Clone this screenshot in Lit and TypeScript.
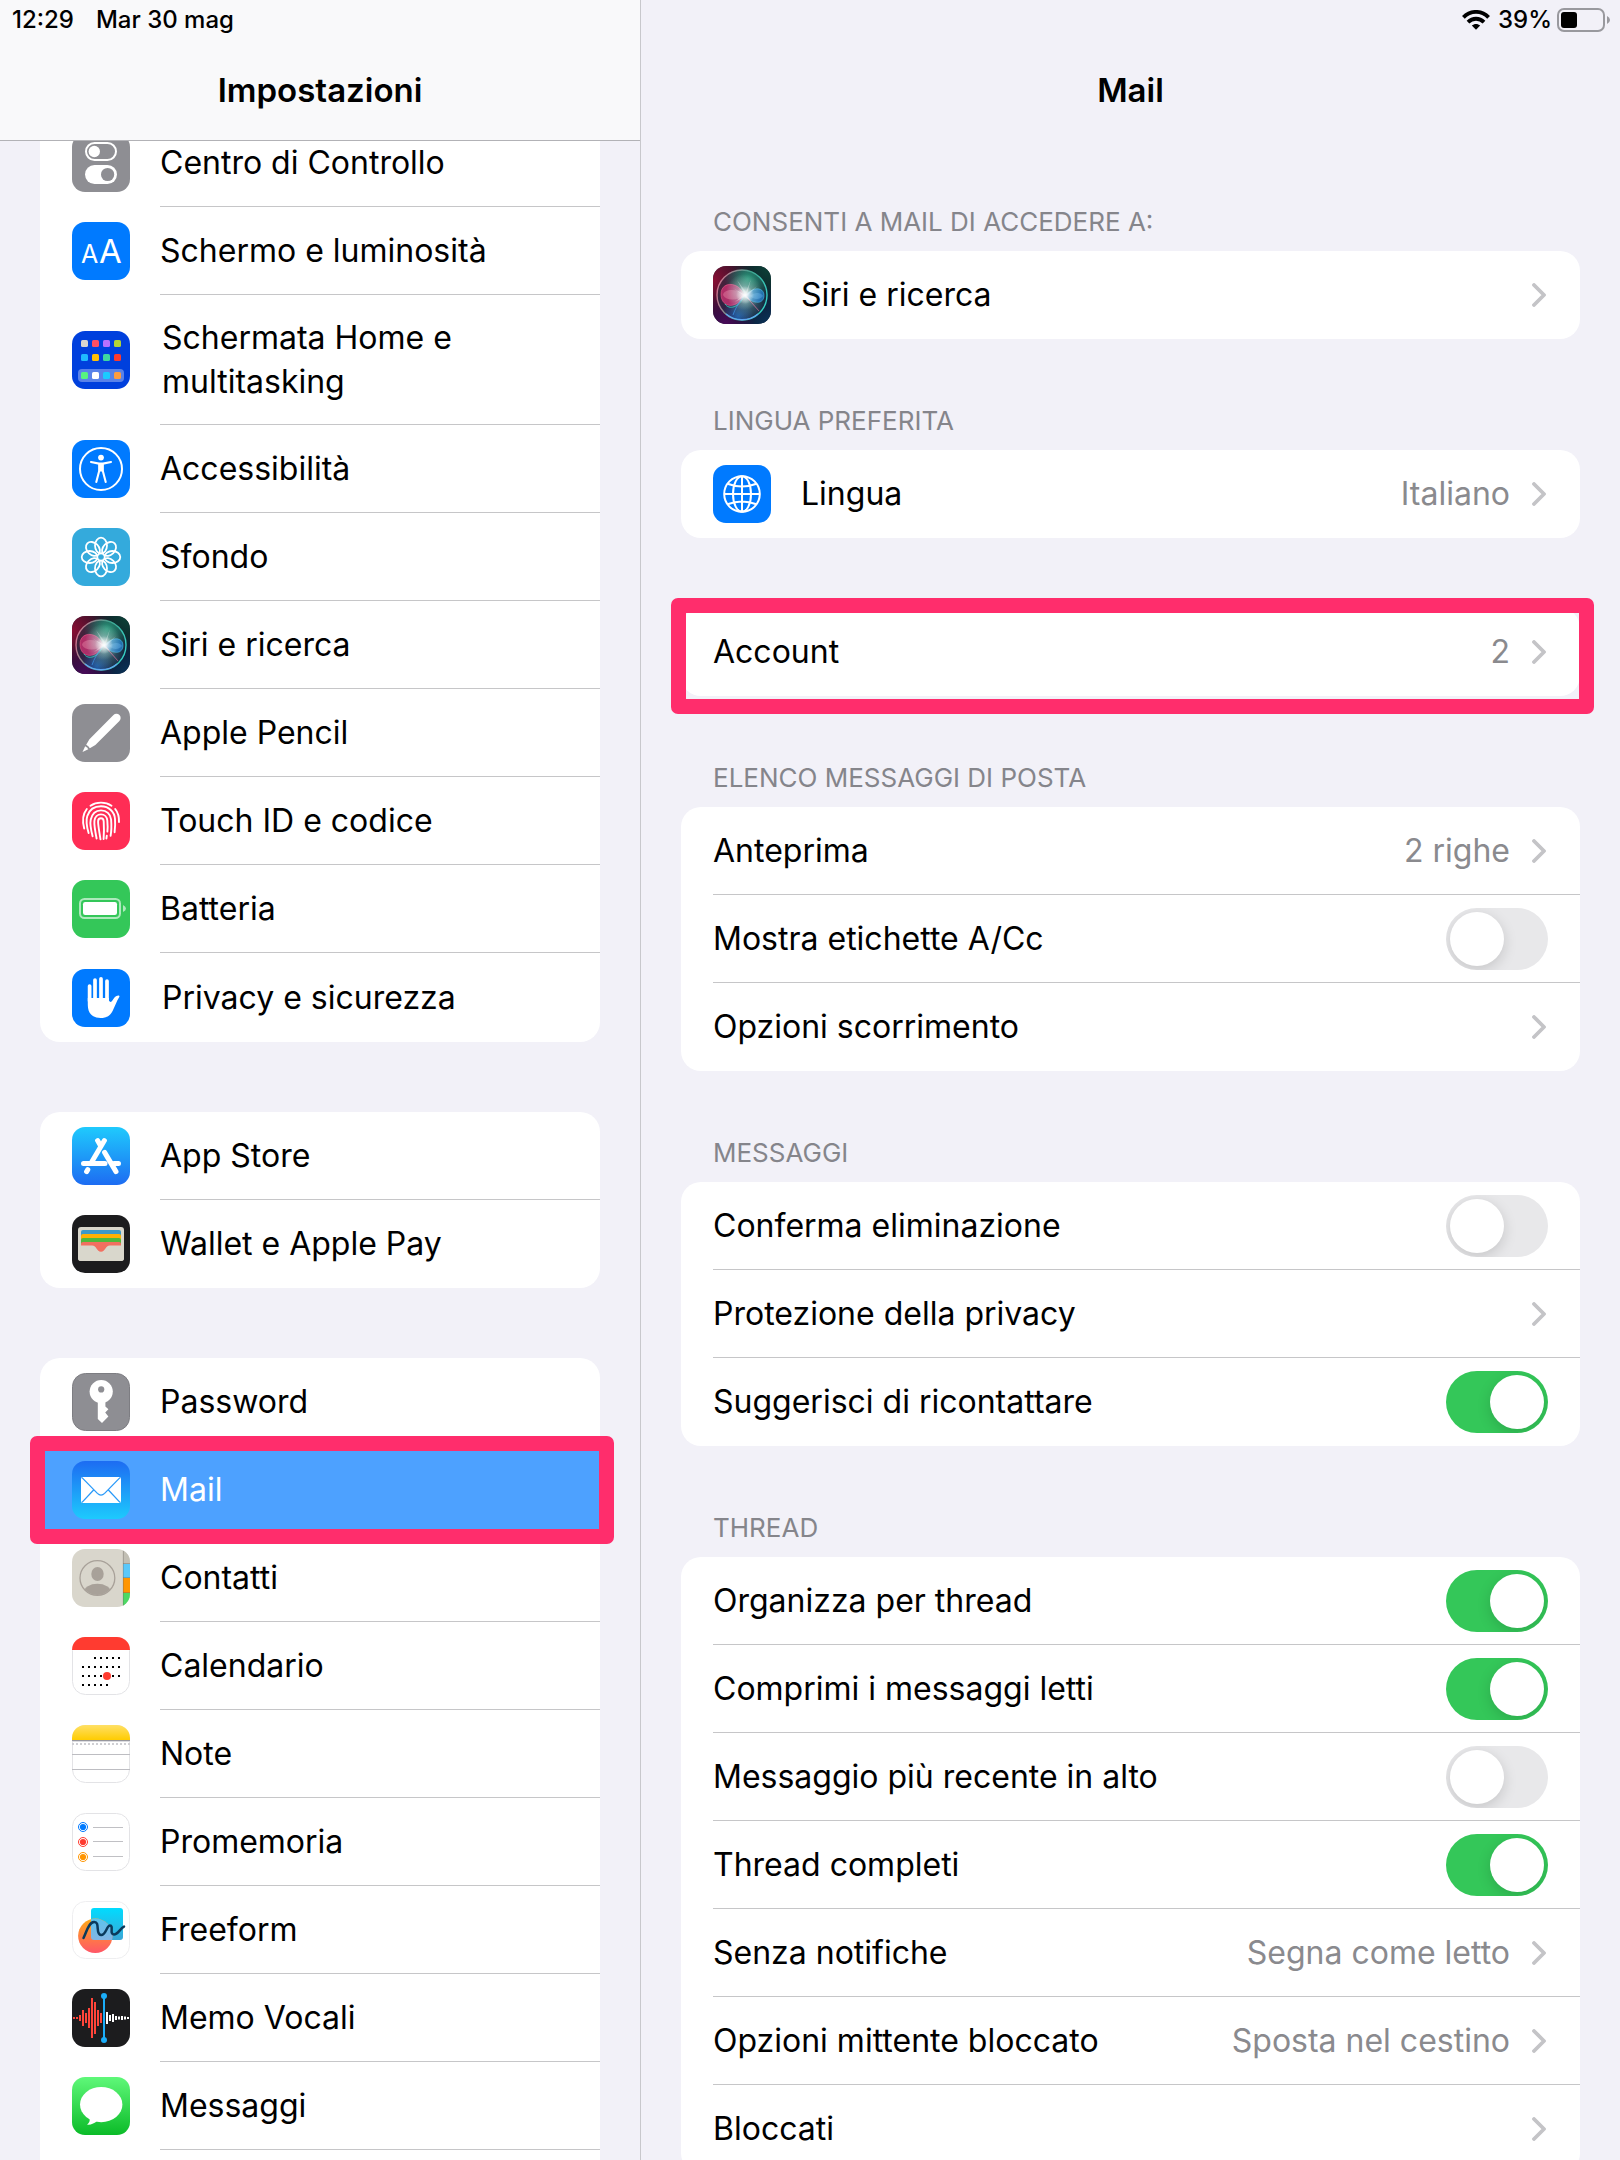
import { LitElement, html, svg, css, nothing, TemplateResult } from "lit";
import { customElement, property, state } from "lit/decorators.js";
import { classMap } from "lit/directives/class-map.js";

type Art = TemplateResult | TemplateResult[];

const plate = (fill: string): Art => svg`<rect width="58" height="58" rx="13" fill=${fill} />`;
const outlined = svg`<rect x="0.5" y="0.5" width="57" height="57" rx="13" fill="#fff" stroke="#e3e3e6" />`;
const vertical = (id: string, from: string, to: string) => svg`
  <linearGradient id=${id} x1="0" y1="0" x2="0" y2="1">
    <stop offset="0" stop-color=${from} /><stop offset="1" stop-color=${to} />
  </linearGradient>`;
const glow = (id: string, cx: number, cy: number, r: number, color: string, alpha = 1) => svg`
  <radialGradient id=${id} gradientUnits="userSpaceOnUse" cx=${cx} cy=${cy} r=${r}>
    <stop offset="0" stop-color=${color} stop-opacity=${alpha} />
    <stop offset="1" stop-color=${color} stop-opacity="0" />
  </radialGradient>`;

const homeTiles = [
  [9, ["#d8d5d0", "#ff4f64", "#b871ff", "#b3d435"]],
  [23, ["#1fbaff", "#ffc107", "#3fd8a0", "#ff3a2d"]],
  [41, ["#57f57f", "#ffffff", "#1bcbff", "#ff9d40"]],
] as [number, string[]][];
const calendarDots: [number, number[]][] = [
  [20, [2, 3, 4, 5, 6]],
  [29, [0, 1, 2, 3, 4, 5, 6]],
  [38, [0, 1, 2, 3, 4, 5, 6]],
  [47, [0, 1, 2, 3, 4]],
];
const redBars = [2, 2, 6, 16, 10, 20, 40, 32, 16, 10];
const whiteBars = [12, 6, 8, 4, 3, 4, 3, 2];

const art: Record<string, () => Art> = {
  control: () => svg`${plate("#8e8e93")}
    <rect x="14" y="9" width="30" height="17" rx="8.5" fill="none" stroke="#fff" stroke-width="2" />
    <circle cx="22.3" cy="17.5" r="5.7" fill="#fff" />
    <rect x="13" y="31" width="32" height="19" rx="9.5" fill="#fff" />
    <circle cx="35.6" cy="40.5" r="6.6" fill="#8e8e93" />`,
  display: () => svg`${plate("#007aff")}
    <text class="glyph" x="9" y="41" font-size="25" fill="#fff">A</text>
    <text class="glyph" x="27" y="41" font-size="33" fill="#fff">A</text>`,
  home: () => svg`${plate("#0040dd")}
    <rect x="6" y="38" width="46" height="13" rx="4" fill="#fff" fill-opacity="0.35" />
    ${homeTiles.map(([y, row]) => row.map((c, i) => svg`<rect x=${9 + i * 11} y=${y} width="7" height="7" rx="1.6" fill=${c} />`))}`,
  access: () => svg`${plate("#007aff")}
    <circle cx="29" cy="29" r="21" fill="none" stroke="#fff" stroke-width="2" />
    <circle cx="29" cy="17.6" r="2.9" fill="#fff" />
    <path d="M19 22 L27 23.6 H31 L39 22 M27.3 24 V30.5 L24.3 42 M30.7 24 V30.5 L33.7 42" fill="none" stroke="#fff" stroke-width="2.1" stroke-linecap="round" stroke-linejoin="round" />
    <path d="M26.5 23 H31.5 V31.5 H26.5Z" fill="#fff" />`,
  wallpaper: () => svg`${plate("#34aadc")}
    <g fill="none" stroke="#fff" stroke-width="1.8">
      ${[0, 45, 90, 135, 180, 225, 270, 315].map((a) => svg`<ellipse cx="29" cy="17.6" rx="6" ry="7.9" transform=${`rotate(${a} 29 29)`} />`)}
    </g>`,
  siri: () => svg`
    <defs>
      <clipPath id="siri-clip"><rect width="58" height="58" rx="13" /></clipPath>
      ${glow("s-tl", 0, 14, 42, "#8a0f34")}${glow("s-tr", 58, 0, 42, "#0b4538")}
      ${glow("s-br", 58, 58, 40, "#08345a")}${glow("s-bl", 12, 58, 30, "#4a0a5a")}
      ${glow("s-top", 35, 13, 23, "#2ba884", 0.85)}${glow("s-low", 25, 50, 16, "#1f6dc0", 0.8)}
      ${glow("s-haze", 33, 36, 18, "#5f9aa2", 0.7)}
      ${glow("s-core", 32, 29, 9, "#ffffff")}${glow("s-halo", 31, 26, 18, "#d0f2ec", 0.65)}
      <linearGradient id="s-ring" x1="0" y1="0.3" x2="1" y2="0.6">
        <stop offset="0" stop-color="#d0708c" /><stop offset="0.55" stop-color="#3fa58f" /><stop offset="1" stop-color="#36cfc4" />
      </linearGradient>
    </defs>
    <g clip-path="url(#siri-clip)">
      <rect width="58" height="58" fill="#111226" />
      <rect width="58" height="58" fill="url(#s-tl)" /><rect width="58" height="58" fill="url(#s-tr)" />
      <rect width="58" height="58" fill="url(#s-br)" /><rect width="58" height="58" fill="url(#s-bl)" />
      <circle cx="29" cy="29" r="25" fill="#1f3448" fill-opacity="0.5" />
      <circle cx="29" cy="29" r="25" fill="url(#s-top)" /><circle cx="29" cy="29" r="25" fill="url(#s-low)" />
      <circle cx="29" cy="29" r="25" fill="url(#s-haze)" />
      <path d="M31 29 C26 15 8 15 8 28 C8 43 25 43 31 29Z" fill="#e0357a" fill-opacity="0.7" stroke="#f05a8c" stroke-opacity="0.7" stroke-width="0.8" />
      <path d="M31 29 C24 22 11 23 10 29 C13 35 25 35 31 29Z" fill="#f4a0b8" fill-opacity="0.35" />
      <path d="M12 38 C16 44 26 42 31 30" fill="none" stroke="#35b8b0" stroke-width="1" />
      <path d="M32 30 C40 20 51 21 51 29.5 C51 38 41 39 32 30Z" fill="#2a8fe6" fill-opacity="0.65" stroke="#4cc4f0" stroke-opacity="0.7" stroke-width="0.8" />
      <path d="M37 30 C41 26 48 26 50 30 C47 34 41 34 37 30Z" fill="#7cc8ff" fill-opacity="0.3" />
      <path d="M33 30 L46 45 L37 35Z" fill="#e08aac" fill-opacity="0.7" stroke="#d9709a" stroke-opacity="0.5" stroke-width="0.8" />
      <path d="M30 31 C25 38 22 43 20 49" fill="none" stroke="#3a8de0" stroke-opacity="0.8" stroke-width="1" />
      <rect width="58" height="58" fill="url(#s-halo)" /><rect width="58" height="58" fill="url(#s-core)" />
      <path d="M32 29 L24 14 L33 26 L38 13 L34 28 L44 20 L34 30 L38 35 L31 31 L22 36 L30 29 L20 22Z" fill="#fff" fill-opacity="0.35" />
      <circle cx="29" cy="29" r="25" fill="none" stroke="url(#s-ring)" stroke-width="1.4" />
      <path d="M13 48 A25 25 0 0 0 45 48" fill="none" stroke="#5fa6f0" stroke-width="1.4" />
    </g>`,
  pencil: () => svg`${plate("#8e8e93")}
    <g transform="translate(10.5 48) rotate(-45)" fill="#fff">
      <path d="M0 0 L6 -2.2 Q6.8 0 6 2.2Z" /><path d="M7.8 -2.6 L14 -4.2 H48 a4.2 4.2 0 0 1 0 8.4 H14 L7.8 2.6 Q8.6 0 7.8 -2.6Z" />
    </g>`,
  touch: () => svg`${plate("#ff2d55")}
    <g fill="none" stroke="#fff" stroke-width="1.9" stroke-linecap="round">
      <path d="M18.5 13.8 C24.5 9.6 33.5 9.6 39.5 13.8" />
      <path d="M14.8 17 C10.4 22.5 10.2 29 12.2 36.5" /><path d="M43.2 17 C46.4 21 47.2 25 47 30" />
      <path d="M16.6 41 C14.2 33 14 28 15.3 24 C17.5 17.5 23 14.3 29 14.3 C37 14.3 42.5 20 43 27 C43.5 33 43 37 42.6 40.2" />
      <path d="M20.6 44.3 C18.4 36 17.8 32 18.7 27.8 C20 22 24 18.4 29 18.4 C34.5 18.4 38.6 22 39.1 27.5 C39.6 34 39.3 40 38.6 43.8" />
      <path d="M24.6 46.5 C22.9 38 22 33 22.4 29 C22.8 25 25.5 22.4 29 22.4 C32.5 22.4 35 25 35.3 28.5 C35.8 34 35.7 37 35.4 39.6" />
      <path d="M34.8 43.6 L34.4 46.5" />
      <path d="M28.5 47.4 C27.4 40 26.1 34 26.1 29.5 C26.1 27.5 27.3 26.3 29 26.3 C30.8 26.3 31.6 27.5 31.7 29.5 C32.1 36 32 42 31.6 47" />
    </g>`,
  battery: () => svg`${plate("#34c759")}
    <rect x="8" y="19" width="40" height="19" rx="4.5" fill="none" stroke="#fff" stroke-opacity="0.6" stroke-width="2" />
    <rect x="11" y="22" width="34" height="13" rx="2.2" fill="#fff" />
    <path d="M51 25 Q54 26.5 54 28.5 Q54 30.5 51 32Z" fill="#fff" fill-opacity="0.6" />`,
  privacy: () => svg`${plate("#007aff")}
    <path d="M17.6 17 V32 M23 11 V30 M29 9.8 V30 M35 12 V32" stroke="#fff" stroke-width="3.7" stroke-linecap="round" />
    <path d="M15.8 29 H36.9 V31.6 C37.8 33.4 39.4 33.4 40.4 31.6 C42 28.6 43.8 26.2 46.6 26.4 C47.8 26.6 47.6 27.6 47 28.4 C44.8 31.6 43 37 40.6 42 C38 47 34 49 28.6 49 C20.4 49 15.8 44 15.8 36Z" fill="#fff" />`,
  store: () => svg`<defs>${vertical("g-store", "#1fcafd", "#1d6cf2")}</defs>${plate("url(#g-store)")}
    <path d="M32.4 13.6 L20 34.6 M25.6 13.6 L28.4 18.4 M32.6 25.4 L44 44.6 M11.5 36.5 H33 M42 36.5 H46.5 M15.8 42.6 L14.6 44.6" fill="none" stroke="#fff" stroke-width="5" stroke-linecap="round" />`,
  wallet: () => svg`${plate("#1c1c1e")}
    <rect x="6" y="12" width="46" height="34" rx="3" fill="#d9d7cc" />
    <path d="M9 31 V17 a2 2 0 0 1 2 -2 H47 a2 2 0 0 1 2 2 V31Z" fill="#3b99c9" />
    <path d="M9 31 V21 a2 2 0 0 1 2 -2 H47 a2 2 0 0 1 2 2 V31Z" fill="#ffb003" />
    <path d="M9 31 V25 a2 2 0 0 1 2 -2 H47 a2 2 0 0 1 2 2 V31Z" fill="#4fb83c" />
    <path d="M9 38 V29 a2 2 0 0 1 2 -2 H47 a2 2 0 0 1 2 2 V38Z" fill="#f26f60" />
    <path d="M6 30.5 H20 C25 30.5 24.5 36.8 29 36.8 C33.5 36.8 33 30.5 38 30.5 H52 V43 a3 3 0 0 1 -3 3 H9 a3 3 0 0 1 -3 -3Z" fill="#d9d7cc" />`,
  key: () => svg`<rect x="0.5" y="0.5" width="57" height="57" rx="13" fill="#8e8e93" stroke="#7d7d82" />
    <circle cx="29.2" cy="18.6" r="11.6" fill="#fff" />
    <path d="M25.8 27 H33.4 V33.4 L36.4 36.2 L33.2 39.6 L36.4 43.6 L30 50 L25.8 46Z" fill="#fff" />
    <circle cx="29.2" cy="16.4" r="3.1" fill="#8e8e93" />`,
  mail: () => svg`<defs>${vertical("g-mail", "#1d6cf2", "#1dcafd")}</defs>${plate("url(#g-mail)")}
    <rect x="9" y="16" width="40" height="26" rx="2" fill="#fff" />
    <path d="M10 16.6 L25.4 32.4 Q29 35.8 32.6 32.4 L48 16.6 M21.6 29 L10 41.4 M36.4 29 L48 41.4" fill="none" stroke="#2a9af9" stroke-width="1.3" />`,
  contacts: () => svg`
    <defs><clipPath id="c-clip"><rect width="58" height="58" rx="13" /></clipPath><clipPath id="c-face"><circle cx="25.4" cy="29" r="17" /></clipPath></defs>
    <g clip-path="url(#c-clip)">
      <rect width="58" height="58" fill="#d9d6cc" />
      <rect x="51" width="7" height="15" fill="#c2bfb4" /><rect x="51" y="15" width="7" height="14" fill="#5ac8fa" />
      <rect x="51" y="29" width="7" height="15" fill="#ff9500" /><rect x="51" y="44" width="7" height="14" fill="#4cd964" />
      <path d="M51 14.5 H58 M51 28.5 H58 M51 43.5 H58 M51.3 0 V58" stroke="#6b675e" stroke-opacity="0.5" stroke-width="0.8" />
    </g>
    <circle cx="25.4" cy="29" r="17.4" fill="none" stroke="#a8a199" stroke-width="1.3" />
    <ellipse cx="25.5" cy="25" rx="6.2" ry="7" fill="#a8a199" />
    <ellipse cx="25.4" cy="43" rx="13.5" ry="8.2" fill="#a8a199" clip-path="url(#c-face)" />`,
  calendar: () => svg`${outlined}
    <path d="M0 13 A13 13 0 0 1 13 0 H45 A13 13 0 0 1 58 13Z" fill="#ff3b30" />
    ${calendarDots.map(([y, cols]) => cols.map((c) => svg`<rect x=${10 + c * 6} y=${y} width="2" height="2" fill="#000" />`))}
    <circle cx="35" cy="39" r="4" fill="#ff3b30" />`,
  notes: () => svg`<defs>${vertical("g-note", "#ffe066", "#ffcc00")}</defs>${outlined}
    <path d="M0 15 V13 A13 13 0 0 1 13 0 H45 A13 13 0 0 1 58 13 V15Z" fill="url(#g-note)" />
    <rect y="15" width="58" height="1" fill="#98989e" /><rect y="16" width="58" height="1" fill="#dcdce0" />
    <path d="M0 19 H58" stroke="#cfcfd3" stroke-width="2" stroke-dasharray="2 2" />
    <rect y="29" width="58" height="1" fill="#bdbdc2" /><rect y="44" width="58" height="1" fill="#bdbdc2" />`,
  reminders: () => svg`${outlined}
    ${["#007aff", "#ff3b30", "#ff9500"].map((c, i) => svg`
      <circle cx="11" cy=${14 + i * 15} r="4.5" fill="none" stroke=${c} stroke-width="1" />
      <circle cx="11" cy=${14 + i * 15} r="3.1" fill=${c} />
      <rect x="21" y=${14 + i * 15 - (i ? 1 : 0)} width="30" height="1" fill="#c0c0c4" />`)}`,
  freeform: () => svg`
    <defs>${vertical("g-sq", "#00dcff", "#3ca6d6")}${vertical("g-ci", "#ffab17", "#ff5668")}${vertical("g-mix", "#5cc4ee", "#9aabdc")}
      <clipPath id="f-sq"><rect x="19" y="7" width="32" height="32" rx="3" /></clipPath></defs>
    <rect x="0.5" y="0.5" width="57" height="57" rx="13" fill="#fff" stroke="#eeeef0" />
    <rect x="19" y="7" width="32" height="32" rx="3" fill="url(#g-sq)" />
    <circle cx="23.3" cy="34.8" r="17.2" fill="url(#g-ci)" />
    <circle cx="23.3" cy="34.8" r="17.2" fill="url(#g-mix)" clip-path="url(#f-sq)" />
    <path d="M11.5 37 C15 30 16.5 21.5 22 21 C28.5 20.5 23 33.5 29 34 C34 34.4 34.5 24.5 38 24.5 C42 24.5 37 33.5 42 33.5 C46 33.5 48 27.5 52 25.6" fill="none" stroke="#0b3a5b" stroke-width="2.5" stroke-linecap="round" />`,
  voice: () => svg`${plate("#1c1c1e")}
    ${redBars.map((h, i) => svg`<rect x=${1 + i * 3} y=${29 - h / 2} width="2" height=${h} fill="#ff453a" />`)}
    ${whiteBars.map((h, i) => svg`<rect x=${34 + i * 3} y=${29 - h / 2} width="2" height=${h} fill="#fff" />`)}
    <rect x="31" y="7" width="2" height="44" fill="#1badf8" />
    <circle cx="32" cy="7" r="3" fill="#1badf8" /><circle cx="32" cy="51" r="3" fill="#1badf8" />`,
  messages: () => svg`<defs>${vertical("g-msg", "#5ff879", "#0bbb28")}</defs>${plate("url(#g-msg)")}
    <ellipse cx="29.2" cy="27.6" rx="21.2" ry="17.6" fill="#fff" />
    <path d="M17 40 C18.5 43.5 17.5 45.8 14.8 47.6 C18.8 48.2 22.5 46.2 25 44Z" fill="#fff" />`,
  globe: () => svg`${plate("#007aff")}
    <g fill="none" stroke="#fff" stroke-width="2">
      <circle cx="29" cy="29" r="17.8" /><ellipse cx="29" cy="29" rx="9" ry="17.8" />
      <path d="M29 11 V47 M11 29 H47 M14.5 18.8 Q29 24.4 43.5 18.8 M14.5 39.2 Q29 33.6 43.5 39.2" />
    </g>`,
};

@customElement("app-icon")
export class AppIcon extends LitElement {
  @property() name = "";
  static styles = css`
    :host { display: block; flex: none; width: 58px; height: 58px; }
    svg { display: block; width: 100%; height: 100%; }
    .glyph { font-family: Inter, sans-serif; font-weight: 400; }
  `;
  render() {
    return html`<svg viewBox="0 0 58 58" aria-hidden="true">${art[this.name]?.()}</svg>`;
  }
}

interface NavItem { icon: string; label: string; roomy?: boolean; }
interface Setting { id: string; label: string; icon?: string; value?: string; toggle?: boolean; marked?: boolean; }
interface Section { title?: string; rows: Setting[]; }

const navGroups: NavItem[][] = [
  [
    { icon: "control", label: "Centro di Controllo" },
    { icon: "display", label: "Schermo e luminosità" },
    { icon: "home", label: "Schermata Home e multitasking", roomy: true },
    { icon: "access", label: "Accessibilità" },
    { icon: "wallpaper", label: "Sfondo" },
    { icon: "siri", label: "Siri e ricerca" },
    { icon: "pencil", label: "Apple Pencil" },
    { icon: "touch", label: "Touch ID e codice" },
    { icon: "battery", label: "Batteria" },
    { icon: "privacy", label: "Privacy e sicurezza", roomy: true },
  ],
  [
    { icon: "store", label: "App Store" },
    { icon: "wallet", label: "Wallet e Apple Pay" },
  ],
  [
    { icon: "key", label: "Password" },
    { icon: "mail", label: "Mail" },
    { icon: "contacts", label: "Contatti" },
    { icon: "calendar", label: "Calendario" },
    { icon: "notes", label: "Note" },
    { icon: "reminders", label: "Promemoria" },
    { icon: "freeform", label: "Freeform" },
    { icon: "voice", label: "Memo Vocali" },
    { icon: "messages", label: "Messaggi" },
  ],
];

const sections: Section[] = [
  { title: "Consenti a Mail di accedere a:", rows: [{ id: "siri", label: "Siri e ricerca", icon: "siri" }] },
  { title: "Lingua preferita", rows: [{ id: "lingua", label: "Lingua", icon: "globe", value: "Italiano" }] },
  { rows: [{ id: "account", label: "Account", value: "2", marked: true }] },
  {
    title: "Elenco messaggi di posta",
    rows: [
      { id: "anteprima", label: "Anteprima", value: "2 righe" },
      { id: "etichette", label: "Mostra etichette A/Cc", toggle: false },
      { id: "scorrimento", label: "Opzioni scorrimento" },
    ],
  },
  {
    title: "Messaggi",
    rows: [
      { id: "conferma", label: "Conferma eliminazione", toggle: false },
      { id: "protezione", label: "Protezione della privacy" },
      { id: "ricontattare", label: "Suggerisci di ricontattare", toggle: true },
    ],
  },
  {
    title: "Thread",
    rows: [
      { id: "organizza", label: "Organizza per thread", toggle: true },
      { id: "comprimi", label: "Comprimi i messaggi letti", toggle: true },
      { id: "recente", label: "Messaggio più recente in alto", toggle: false },
      { id: "completi", label: "Thread completi", toggle: true },
      { id: "notifiche", label: "Senza notifiche", value: "Segna come letto" },
      { id: "mittente", label: "Opzioni mittente bloccato", value: "Sposta nel cestino" },
      { id: "bloccati", label: "Bloccati" },
    ],
  },
];

@customElement("app-root")
export class AppRoot extends LitElement {
  @state() private selected = "mail";

  static styles = css`
    :host {
      display: block;
      height: 100vh;
      overflow: hidden;
      background: #f2f1f8;
      color: #000;
      font-family: Inter, "Liberation Sans", sans-serif;
      font-size: 32px;
      line-height: 44px;
    }
    * { box-sizing: border-box; }
    .shell { display: grid; grid-template-columns: minmax(0, 641fr) minmax(0, 979fr); height: 100%; }
    .pane { display: flex; flex-direction: column; min-width: 0; min-height: 0; }
    .sidebar { border-right: 1px solid #c8c8cc; }
    .head { flex: none; display: flex; flex-direction: column; height: 141px; border-bottom: 1px solid transparent; }
    .sidebar .head { background: #f9f9fa; border-bottom-color: #b2b2b6; }
    .status { display: flex; align-items: center; height: 40px; padding: 0 10px 0 12px; font-size: 24px; line-height: 32px; font-weight: 500; }
    .clock { gap: 22px; }
    .power { justify-content: flex-end; }
    .power span { margin: 0 5px 0 8px; }
    .power svg { display: block; flex: none; }
    .title { margin: 0; font-size: 33px; line-height: 100px; font-weight: 600; text-align: center; }
    .scroll { flex: 1; min-height: 0; overflow-y: auto; scrollbar-width: none; padding: 0 40px 40px; }
    .groups { display: flex; flex-direction: column; gap: 70px; margin-top: -22px; }
    .card { margin: 0; padding: 0; list-style: none; background: #fff; border-radius: 20px; }
    .item { position: relative; }
    .row {
      display: flex; align-items: stretch; width: 100%; min-height: 88px; padding: 0 0 0 32px;
      border: 0; background: none; color: inherit; font: inherit; text-align: left; text-decoration: none; cursor: pointer;
    }
    .row app-icon { align-self: center; margin-right: 30px; }
    .body { flex: 1; min-width: 0; display: flex; align-items: center; gap: 22px; padding: 21px 32px 20px 0; border-bottom: 1px solid #c6c6c8; }
    .item:last-child .body, .before .body { border-bottom-color: transparent; }
    .roomy .row { min-height: 89px; }
    .roomy .body { padding-left: 2px; }
    .active .row { background: #4da1ff; color: #fff; }
    .active .body { border-bottom-color: transparent; }
    .groups .card:last-child { padding-bottom: 88px; }
    .groups .card:last-child .item:last-child .body { border-bottom-color: #c6c6c8; }
    .label { flex: 1; min-width: 0; }
    .value { color: #8a8a8e; }
    .chevron { flex: none; display: block; margin-right: 2px; }
    .marker { position: absolute; z-index: 1; inset: -10px -14px -10px -10px; border: 15px solid #ff2d6c; border-radius: 7px; pointer-events: none; }
    .marker.low { bottom: -18px; }
    .section { margin-top: 70px; }
    .section.titled { margin-top: 66px; }
    .section:first-child { margin-top: 65px; }
    .caption { margin: 0 0 13px; padding-left: 32px; font-size: 26px; line-height: 32px; font-weight: 400; color: #85858b; text-transform: uppercase; }
    .switch {
      appearance: none; flex: none; display: flex; width: 102px; height: 62px; margin: -10px 0; padding: 4px;
      overflow: hidden; border-radius: 31px; background: #e8e8ea; cursor: pointer;
    }
    .switch::before { content: ""; width: 54px; height: 54px; border-radius: 50%; background: #fff; box-shadow: 0 4px 14px rgba(0, 0, 0, 0.15); }
    .switch:checked { background: #34c759; justify-content: flex-end; }
  `;

  private navItem(item: NavItem, index: number, group: NavItem[]) {
    const active = item.icon === this.selected;
    const before = group[index + 1]?.icon === this.selected;
    return html`<li class=${classMap({ item: true, roomy: !!item.roomy, active, before })}>
      <a class="row" href="#${item.icon}" aria-current=${active ? "page" : nothing}
        @click=${(e: Event) => { e.preventDefault(); this.selected = item.icon; }}>
        <app-icon name=${item.icon}></app-icon>
        <span class="body"><span class="label">${item.label}</span></span>
      </a>
      ${active ? html`<span class="marker"></span>` : nothing}
    </li>`;
  }

  private chevron() {
    return html`<svg class="chevron" width="14" height="24" viewBox="0 0 14 24" aria-hidden="true">
      <path d="M2 2 L12 12 L2 22" fill="none" stroke="#c4c4c7" stroke-width="3.8" stroke-linecap="round" stroke-linejoin="round" />
    </svg>`;
  }

  private setting(row: Setting) {
    const icon = row.icon ? html`<app-icon name=${row.icon}></app-icon>` : nothing;
    if (row.toggle !== undefined) {
      return html`<li class="item"><label class="row" for=${row.id}>
        <span class="body"><span class="label">${row.label}</span>
          <input class="switch" type="checkbox" role="switch" id=${row.id} .checked=${row.toggle} /></span>
      </label></li>`;
    }
    return html`<li class="item">
      <button class="row" type="button">${icon}
        <span class="body"><span class="label">${row.label}</span>
          ${row.value ? html`<span class="value">${row.value}</span>` : nothing}${this.chevron()}</span>
      </button>
      ${row.marked ? html`<span class="marker low"></span>` : nothing}
    </li>`;
  }

  render() {
    return html`<div class="shell">
      <nav class="pane sidebar" aria-label="Impostazioni">
        <header class="head">
          <div class="status clock"><time>12:29</time><span>Mar 30 mag</span></div>
          <h1 class="title">Impostazioni</h1>
        </header>
        <div class="scroll"><div class="groups">
          ${navGroups.map((g) => html`<ul class="card">${g.map((i, n) => this.navItem(i, n, g))}</ul>`)}
        </div></div>
      </nav>
      <main class="pane">
        <header class="head">
          <div class="status power">
            <svg width="28" height="20" viewBox="0 0 28 20" aria-hidden="true">
              <g fill="none" stroke="#000" stroke-width="3.8">
                <path d="M1.4 7.4 C8.5 0 19.5 0 26.6 7.4" /><path d="M6 12.2 C10.6 7.6 17.4 7.6 22 12.2" />
              </g>
              <path d="M14 19.8 L9.8 15.6 C12.2 13.4 15.8 13.4 18.2 15.6Z" />
            </svg>
            <span>39%</span>
            <svg width="53" height="24" viewBox="0 0 53 24" aria-hidden="true">
              <rect x="1" y="1" width="46" height="22" rx="6" fill="none" stroke="#99999e" stroke-width="2" />
              <rect x="4" y="4" width="16" height="16" rx="3" />
              <path d="M50 8 Q53 9.5 53 12 Q53 14.5 50 16Z" fill="#99999e" />
            </svg>
          </div>
          <h2 class="title">Mail</h2>
        </header>
        <div class="scroll">
          ${sections.map((s) => html`<section class=${classMap({ section: true, titled: !!s.title })}>
            ${s.title ? html`<h3 class="caption">${s.title}</h3>` : nothing}
            <ul class="card">${s.rows.map((r) => this.setting(r))}</ul>
          </section>`)}
        </div>
      </main>
    </div>`;
  }
}
